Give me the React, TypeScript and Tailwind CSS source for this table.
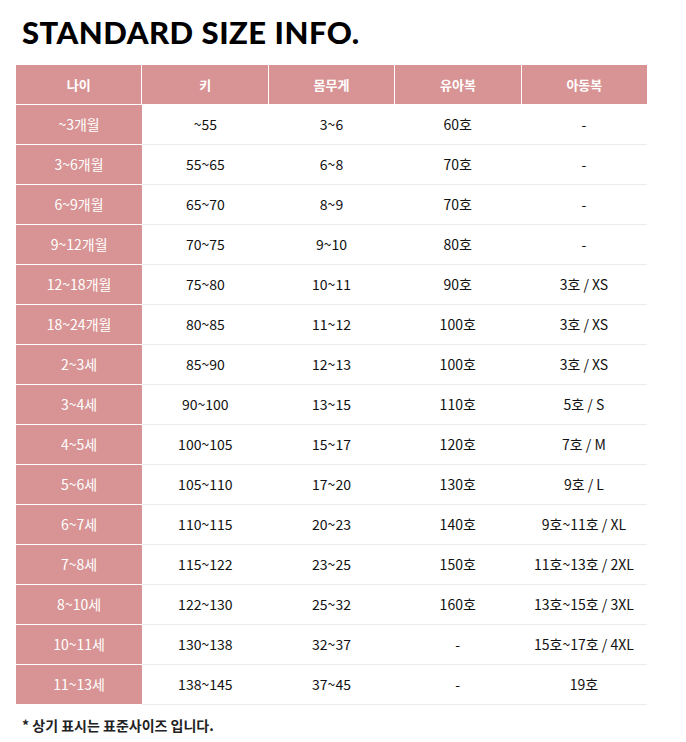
import React from "react";

const rows: string[][] = [
  ["~3개월", "~55", "3~6", "60호", "-"],
  ["3~6개월", "55~65", "6~8", "70호", "-"],
  ["6~9개월", "65~70", "8~9", "70호", "-"],
  ["9~12개월", "70~75", "9~10", "80호", "-"],
  ["12~18개월", "75~80", "10~11", "90호", "3호 / XS"],
  ["18~24개월", "80~85", "11~12", "100호", "3호 / XS"],
  ["2~3세", "85~90", "12~13", "100호", "3호 / XS"],
  ["3~4세", "90~100", "13~15", "110호", "5호 / S"],
  ["4~5세", "100~105", "15~17", "120호", "7호 / M"],
  ["5~6세", "105~110", "17~20", "130호", "9호 / L"],
  ["6~7세", "110~115", "20~23", "140호", "9호~11호 / XL"],
  ["7~8세", "115~122", "23~25", "150호", "11호~13호 / 2XL"],
  ["8~10세", "122~130", "25~32", "160호", "13호~15호 / 3XL"],
  ["10~11세", "130~138", "32~37", "-", "15호~17호 / 4XL"],
  ["11~13세", "138~145", "37~45", "-", "19호"],
];

const headers = ["나이", "키", "몸무게", "유아복", "아동복"];

export default function App() {
  return (
    <div
      className="w-[686px] h-[742px] bg-white overflow-hidden text-[#111]"
      style={{ fontFamily: '"Noto Sans CJK KR", "Noto Sans", sans-serif' }}
    >
      <div className="pl-[22px] pt-[14px] h-[65px]">
        <h1
          className="text-[31px] leading-[36px] font-black tracking-[0.5px] text-black"
          style={{ fontFamily: 'Lato, "Noto Sans", sans-serif' }}
        >
          STANDARD SIZE INFO.
        </h1>
      </div>
      <div className="ml-[16px] w-[631px]">
        <div className="flex h-10">
          {headers.map((h, i) => (
            <div
              key={h}
              className={`flex-1 flex items-center justify-center bg-[#d89494] text-white text-[13px] font-bold border-b border-white ${
                i < 4 ? "border-r" : ""
              }`}
            >
              {h}
            </div>
          ))}
        </div>
        {rows.map((r, ri) => (
          <div key={ri} className="flex h-10">
            {r.map((c, ci) => (
              <div
                key={ci}
                className={`flex-1 flex items-center justify-center text-[14px] border-b ${
                  ci === 0
                    ? "bg-[#d89494] text-white border-white"
                    : "bg-white text-[#111] border-[#ececec]"
                }`}
              >
                {c}
              </div>
            ))}
          </div>
        ))}
      </div>
      <div className="pl-[22px] pt-[10px] text-[14px] font-bold text-[#222]">
        * 상기 표시는 표준사이즈 입니다.
      </div>
    </div>
  );
}
